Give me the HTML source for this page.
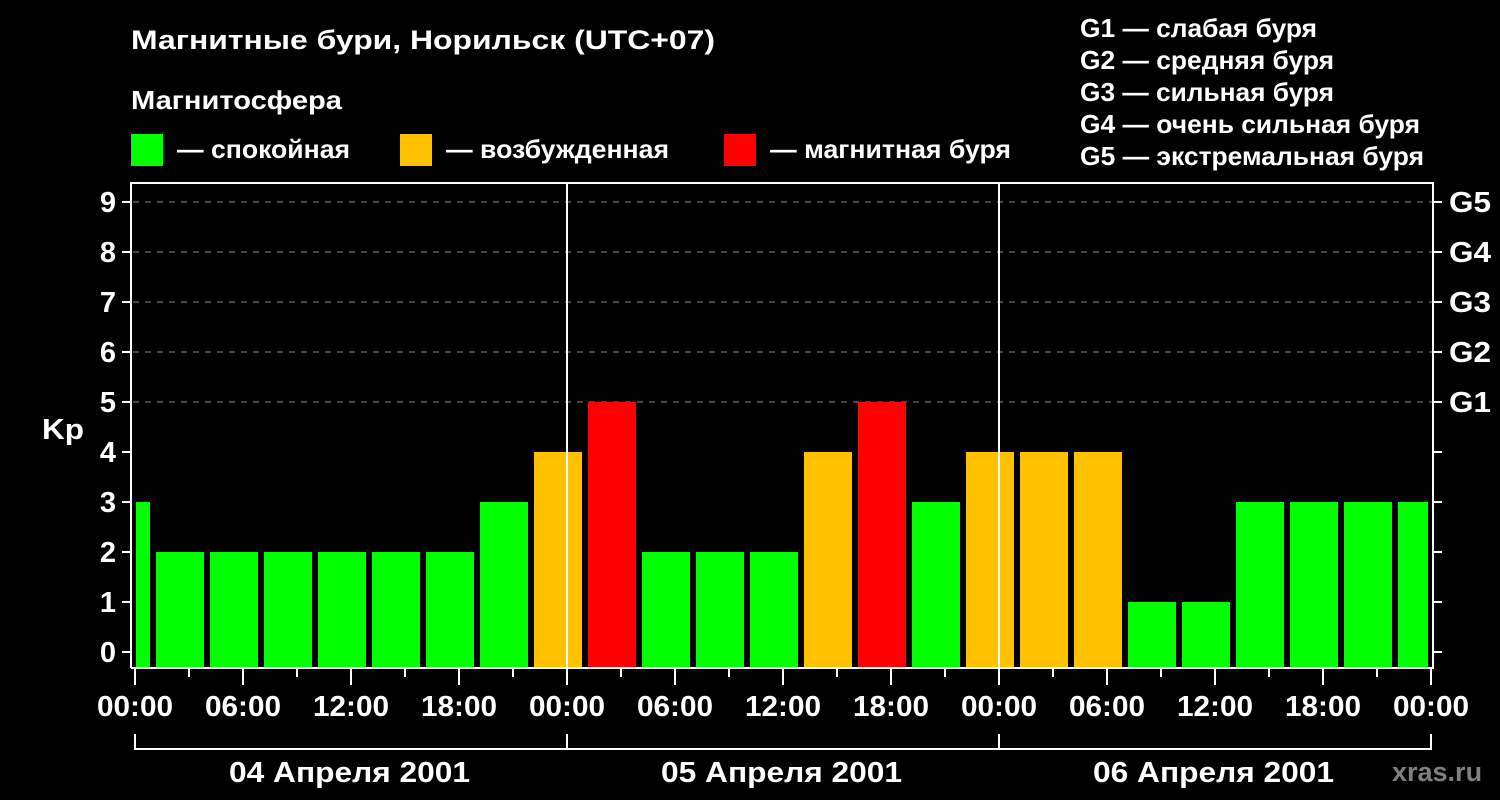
<!DOCTYPE html>
<html><head><meta charset="utf-8"><style>
html,body{margin:0;padding:0;background:#000;}
svg{display:block;}
text{font-family:"Liberation Sans",sans-serif;font-weight:bold;fill:#fff;}
</style></head><body>
<svg width="1500" height="800" viewBox="0 0 1500 800" xmlns="http://www.w3.org/2000/svg">
<rect width="1500" height="800" fill="#000"/>
<text x="131" y="49" font-size="27" textLength="584" lengthAdjust="spacingAndGlyphs">Магнитные бури, Норильск (UTC+07)</text>
<text x="131" y="109" font-size="26" textLength="211" lengthAdjust="spacingAndGlyphs">Магнитосфера</text>
<rect x="131" y="134" width="32" height="32" fill="#00ff00"/>
<text x="177" y="158" font-size="26" textLength="173" lengthAdjust="spacingAndGlyphs">— спокойная</text>
<rect x="400" y="134" width="32" height="32" fill="#ffc000"/>
<text x="446" y="158" font-size="26" textLength="223" lengthAdjust="spacingAndGlyphs">— возбужденная</text>
<rect x="724" y="134" width="32" height="32" fill="#ff0000"/>
<text x="770" y="158" font-size="26" textLength="241" lengthAdjust="spacingAndGlyphs">— магнитная буря</text>
<g font-size="26" lengthAdjust="spacingAndGlyphs">
<text x="1080" y="37" textLength="237" lengthAdjust="spacingAndGlyphs">G1 — слабая буря</text>
<text x="1080" y="69" textLength="254" lengthAdjust="spacingAndGlyphs">G2 — средняя буря</text>
<text x="1080" y="101" textLength="254" lengthAdjust="spacingAndGlyphs">G3 — сильная буря</text>
<text x="1080" y="133" textLength="340" lengthAdjust="spacingAndGlyphs">G4 — очень сильная буря</text>
<text x="1080" y="165" textLength="344" lengthAdjust="spacingAndGlyphs">G5 — экстремальная буря</text>
</g>
<g stroke="#888" stroke-width="1" stroke-dasharray="6,6">
<line x1="133" y1="202" x2="1432" y2="202"/>
<line x1="133" y1="252" x2="1432" y2="252"/>
<line x1="133" y1="302" x2="1432" y2="302"/>
<line x1="133" y1="352" x2="1432" y2="352"/>
<line x1="133" y1="402" x2="1432" y2="402"/>
</g>
<g fill="#00ff00">
<rect x="136" y="502" width="14" height="166"/>
<rect x="156" y="552" width="48" height="116"/>
<rect x="210" y="552" width="48" height="116"/>
<rect x="264" y="552" width="48" height="116"/>
<rect x="318" y="552" width="48" height="116"/>
<rect x="372" y="552" width="48" height="116"/>
<rect x="426" y="552" width="48" height="116"/>
<rect x="480" y="502" width="48" height="166"/>
<rect x="642" y="552" width="48" height="116"/>
<rect x="696" y="552" width="48" height="116"/>
<rect x="750" y="552" width="48" height="116"/>
<rect x="912" y="502" width="48" height="166"/>
<rect x="1128" y="602" width="48" height="66"/>
<rect x="1182" y="602" width="48" height="66"/>
<rect x="1236" y="502" width="48" height="166"/>
<rect x="1290" y="502" width="48" height="166"/>
<rect x="1344" y="502" width="48" height="166"/>
<rect x="1398" y="502" width="30" height="166"/>
</g>
<g fill="#ffc000">
<rect x="534" y="452" width="48" height="216"/>
<rect x="804" y="452" width="48" height="216"/>
<rect x="966" y="452" width="48" height="216"/>
<rect x="1020" y="452" width="48" height="216"/>
<rect x="1074" y="452" width="48" height="216"/>
</g>
<g fill="#ff0000">
<rect x="588" y="402" width="48" height="266"/>
<rect x="858" y="402" width="48" height="266"/>
</g>
<g stroke="#fff" stroke-width="2" fill="none">
<polyline points="131,668 131,183 1433,183 1433,668 131,668"/>
<line x1="567" y1="183" x2="567" y2="668"/>
<line x1="999" y1="183" x2="999" y2="668"/>
</g>
<g stroke="#fff" stroke-width="2">
<line x1="122" y1="202" x2="131" y2="202"/><line x1="122" y1="252" x2="131" y2="252"/>
<line x1="122" y1="302" x2="131" y2="302"/><line x1="122" y1="352" x2="131" y2="352"/>
<line x1="122" y1="402" x2="131" y2="402"/><line x1="122" y1="452" x2="131" y2="452"/>
<line x1="122" y1="502" x2="131" y2="502"/><line x1="122" y1="552" x2="131" y2="552"/>
<line x1="122" y1="602" x2="131" y2="602"/><line x1="122" y1="652" x2="131" y2="652"/>
<line x1="1433" y1="202" x2="1442" y2="202"/><line x1="1433" y1="252" x2="1442" y2="252"/>
<line x1="1433" y1="302" x2="1442" y2="302"/><line x1="1433" y1="352" x2="1442" y2="352"/>
<line x1="1433" y1="402" x2="1442" y2="402"/><line x1="1433" y1="452" x2="1442" y2="452"/>
<line x1="1433" y1="502" x2="1442" y2="502"/><line x1="1433" y1="552" x2="1442" y2="552"/>
<line x1="1433" y1="602" x2="1442" y2="602"/><line x1="1433" y1="652" x2="1442" y2="652"/>
<line x1="135" y1="669" x2="135" y2="685"/><line x1="189" y1="669" x2="189" y2="677"/>
<line x1="243" y1="669" x2="243" y2="685"/><line x1="297" y1="669" x2="297" y2="677"/>
<line x1="351" y1="669" x2="351" y2="685"/><line x1="405" y1="669" x2="405" y2="677"/>
<line x1="459" y1="669" x2="459" y2="685"/><line x1="513" y1="669" x2="513" y2="677"/>
<line x1="567" y1="669" x2="567" y2="685"/><line x1="621" y1="669" x2="621" y2="677"/>
<line x1="675" y1="669" x2="675" y2="685"/><line x1="729" y1="669" x2="729" y2="677"/>
<line x1="783" y1="669" x2="783" y2="685"/><line x1="837" y1="669" x2="837" y2="677"/>
<line x1="891" y1="669" x2="891" y2="685"/><line x1="945" y1="669" x2="945" y2="677"/>
<line x1="999" y1="669" x2="999" y2="685"/><line x1="1053" y1="669" x2="1053" y2="677"/>
<line x1="1107" y1="669" x2="1107" y2="685"/><line x1="1161" y1="669" x2="1161" y2="677"/>
<line x1="1215" y1="669" x2="1215" y2="685"/><line x1="1269" y1="669" x2="1269" y2="677"/>
<line x1="1323" y1="669" x2="1323" y2="685"/><line x1="1377" y1="669" x2="1377" y2="677"/>
<line x1="1431" y1="669" x2="1431" y2="685"/>
</g>
<g stroke="#fff" stroke-width="2" fill="none">
<polyline points="135,734 135,749 1431,749 1431,734"/>
<line x1="567" y1="734" x2="567" y2="749"/>
<line x1="999" y1="734" x2="999" y2="749"/>
</g>
<g font-size="29" text-anchor="end">
<text x="116" y="212">9</text><text x="116" y="262">8</text><text x="116" y="312">7</text>
<text x="116" y="362">6</text><text x="116" y="412">5</text><text x="116" y="462">4</text>
<text x="116" y="512">3</text><text x="116" y="562">2</text><text x="116" y="612">1</text>
<text x="116" y="662">0</text>
</g>
<text x="42" y="439" font-size="29" textLength="42" lengthAdjust="spacingAndGlyphs">Kp</text>
<g font-size="29">
<text x="1449" y="212" textLength="42" lengthAdjust="spacingAndGlyphs">G5</text>
<text x="1449" y="262" textLength="42" lengthAdjust="spacingAndGlyphs">G4</text>
<text x="1449" y="312" textLength="42" lengthAdjust="spacingAndGlyphs">G3</text>
<text x="1449" y="362" textLength="42" lengthAdjust="spacingAndGlyphs">G2</text>
<text x="1449" y="412" textLength="42" lengthAdjust="spacingAndGlyphs">G1</text>
</g>
<g font-size="29">
<text x="97" y="716" textLength="76" lengthAdjust="spacingAndGlyphs">00:00</text>
<text x="205" y="716" textLength="76" lengthAdjust="spacingAndGlyphs">06:00</text>
<text x="313" y="716" textLength="76" lengthAdjust="spacingAndGlyphs">12:00</text>
<text x="421" y="716" textLength="76" lengthAdjust="spacingAndGlyphs">18:00</text>
<text x="529" y="716" textLength="76" lengthAdjust="spacingAndGlyphs">00:00</text>
<text x="637" y="716" textLength="76" lengthAdjust="spacingAndGlyphs">06:00</text>
<text x="745" y="716" textLength="76" lengthAdjust="spacingAndGlyphs">12:00</text>
<text x="853" y="716" textLength="76" lengthAdjust="spacingAndGlyphs">18:00</text>
<text x="961" y="716" textLength="76" lengthAdjust="spacingAndGlyphs">00:00</text>
<text x="1069" y="716" textLength="76" lengthAdjust="spacingAndGlyphs">06:00</text>
<text x="1177" y="716" textLength="76" lengthAdjust="spacingAndGlyphs">12:00</text>
<text x="1285" y="716" textLength="76" lengthAdjust="spacingAndGlyphs">18:00</text>
<text x="1393" y="716" textLength="76" lengthAdjust="spacingAndGlyphs">00:00</text>
<text x="229" y="782" textLength="241" lengthAdjust="spacingAndGlyphs">04 Апреля 2001</text>
<text x="661" y="782" textLength="241" lengthAdjust="spacingAndGlyphs">05 Апреля 2001</text>
<text x="1093" y="782" textLength="241" lengthAdjust="spacingAndGlyphs">06 Апреля 2001</text>
</g>
<text x="1392" y="781" font-size="27" style="fill:#808080">xras.ru</text>
</svg>
</body></html>
